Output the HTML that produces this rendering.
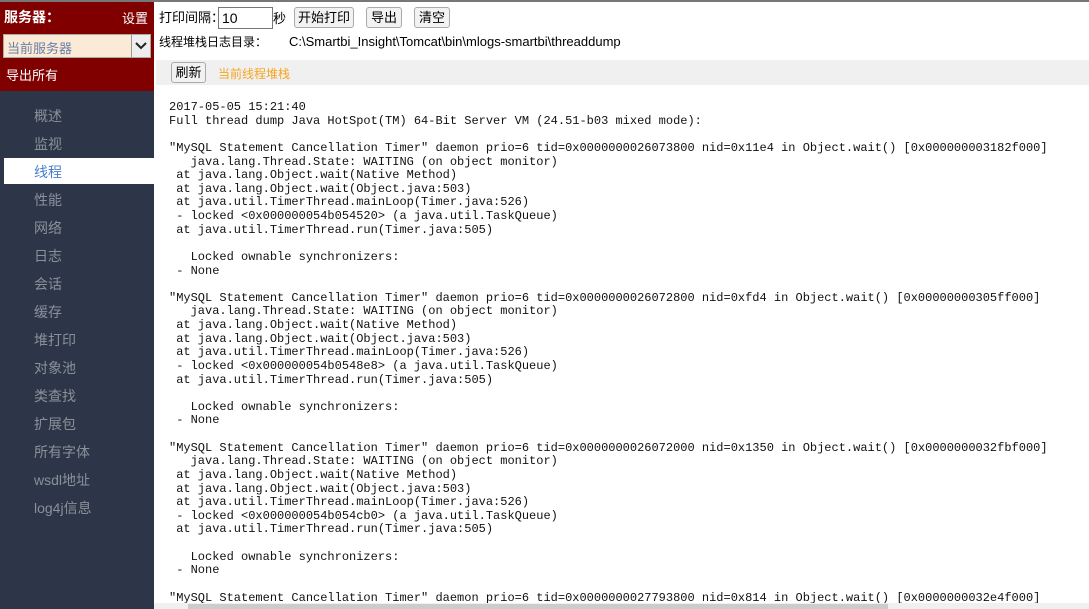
<!DOCTYPE html>
<html><head><meta charset="utf-8"><style>
*{margin:0;padding:0;box-sizing:border-box}
body{width:1089px;height:609px;overflow:hidden;background:#fff;position:relative;font-family:"Liberation Sans","Noto Sans CJK SC",sans-serif;font-size:13px;color:#000}
.cj{font-family:"Noto Sans CJK SC",sans-serif}
.topline{position:absolute;left:0;top:0;width:1089px;height:2px;background:#777}
.side{position:absolute;left:0;top:2px;width:154px;height:607px;background:#2d3648}
.hd{position:absolute;left:0;top:0;width:154px;height:89px;background:#800000;color:#fff}
.hd .t{position:absolute;left:4px;top:5px;font-size:14px;font-weight:bold;font-family:"Noto Sans CJK SC",sans-serif}
.hd .s{position:absolute;right:6px;top:6px;font-size:13px}
.sel{position:absolute;left:3px;top:32px;width:148px;height:24px;background:#fbead6;border:1px solid #aaa;color:#6a7fa8;font-size:13px;padding:3px 0 0 3px}
.sel .b{position:absolute;right:0;top:0;width:19px;height:22px;background:#eee;border-left:1px solid #999}
.hd .e{position:absolute;left:6px;top:63px;font-size:13px}
.nav{position:absolute;left:34px;font-size:14px;color:#8a909a}
.act{position:absolute;left:4px;top:156px;width:150px;height:26px;background:#fff}
.row1{position:absolute;left:159px;top:7px;font-size:13px;white-space:nowrap}
.inp{position:absolute;left:218px;top:7px;width:55px;height:22px;border:1px solid #777;font-size:14px;padding:2px 3px}
.btn{position:absolute;height:21px;border:1px solid #aaa;border-radius:3px;background:#f2f2f2;font-size:13px;text-align:center;line-height:19px}
.bar{position:absolute;left:156px;top:60px;width:933px;height:25px;background:#f0f0f0}
pre{position:absolute;left:169px;top:101px;font-family:"Liberation Mono","Courier New",monospace;font-size:12px;line-height:13.62px;color:#111}
.sb{position:absolute;left:154px;top:603px;width:935px;height:6px;background:#f0f0f0}
.sb i{position:absolute;left:34px;top:1px;width:700px;height:5px;background:#ccc}
</style></head><body>
<div class="side">
 <div class="hd"><div class="t">服务器：</div><div class="s">设置</div>
  <div class="sel">当前服务器<div class="b"><svg width="18" height="22"><path d="M4 8 L9 13 L14 8" stroke="#222" stroke-width="2" fill="none"/></svg></div></div>
  <div class="e">导出所有</div></div>
 <div class="act"></div>
 <div class="nav" style="top:104px">概述</div>
 <div class="nav" style="top:132px">监视</div>
 <div class="nav" style="top:160px;color:#4a7fd0">线程</div>
 <div class="nav" style="top:188px">性能</div>
 <div class="nav" style="top:216px">网络</div>
 <div class="nav" style="top:244px">日志</div>
 <div class="nav" style="top:272px">会话</div>
 <div class="nav" style="top:300px">缓存</div>
 <div class="nav" style="top:328px">堆打印</div>
 <div class="nav" style="top:356px">对象池</div>
 <div class="nav" style="top:384px">类查找</div>
 <div class="nav" style="top:412px">扩展包</div>
 <div class="nav" style="top:440px">所有字体</div>
 <div class="nav" style="top:468px">wsdl地址</div>
 <div class="nav" style="top:496px">log4j信息</div>
</div>
<div class="topline"></div>
<div class="row1 cj" style="top:8px;font-size:13px;line-height:18px">打印间隔：</div>
<div class="inp">10</div>
<div style="position:absolute;left:273px;top:8px">秒</div>
<div class="btn" style="left:294px;top:7px;width:60px">开始打印</div>
<div class="btn" style="left:366px;top:7px;width:36px">导出</div>
<div class="btn" style="left:414px;top:7px;width:36px">清空</div>
<div class="cj" style="position:absolute;left:159px;top:33px;font-size:12px;line-height:18px">线程堆栈日志目录：</div>
<div style="position:absolute;left:289px;top:34px;font-size:13px">C:\Smartbi_Insight\Tomcat\bin\mlogs-smartbi\threaddump</div>
<div class="bar"></div>
<div class="btn" style="left:171px;top:62px;width:35px">刷新</div>
<div style="position:absolute;left:218px;top:65px;font-size:12px;color:#f5a623">当前线程堆栈</div>
<pre>2017-05-05 15:21:40
Full thread dump Java HotSpot(TM) 64-Bit Server VM (24.51-b03 mixed mode):

"MySQL Statement Cancellation Timer" daemon prio=6 tid=0x0000000026073800 nid=0x11e4 in Object.wait() [0x000000003182f000]
   java.lang.Thread.State: WAITING (on object monitor)
 at java.lang.Object.wait(Native Method)
 at java.lang.Object.wait(Object.java:503)
 at java.util.TimerThread.mainLoop(Timer.java:526)
 - locked &lt;0x000000054b054520&gt; (a java.util.TaskQueue)
 at java.util.TimerThread.run(Timer.java:505)

   Locked ownable synchronizers:
 - None

"MySQL Statement Cancellation Timer" daemon prio=6 tid=0x0000000026072800 nid=0xfd4 in Object.wait() [0x00000000305ff000]
   java.lang.Thread.State: WAITING (on object monitor)
 at java.lang.Object.wait(Native Method)
 at java.lang.Object.wait(Object.java:503)
 at java.util.TimerThread.mainLoop(Timer.java:526)
 - locked &lt;0x000000054b0548e8&gt; (a java.util.TaskQueue)
 at java.util.TimerThread.run(Timer.java:505)

   Locked ownable synchronizers:
 - None

"MySQL Statement Cancellation Timer" daemon prio=6 tid=0x0000000026072000 nid=0x1350 in Object.wait() [0x0000000032fbf000]
   java.lang.Thread.State: WAITING (on object monitor)
 at java.lang.Object.wait(Native Method)
 at java.lang.Object.wait(Object.java:503)
 at java.util.TimerThread.mainLoop(Timer.java:526)
 - locked &lt;0x000000054b054cb0&gt; (a java.util.TaskQueue)
 at java.util.TimerThread.run(Timer.java:505)

   Locked ownable synchronizers:
 - None

"MySQL Statement Cancellation Timer" daemon prio=6 tid=0x0000000027793800 nid=0x814 in Object.wait() [0x0000000032e4f000]</pre>
<div class="sb"><i></i></div>
</body></html>
